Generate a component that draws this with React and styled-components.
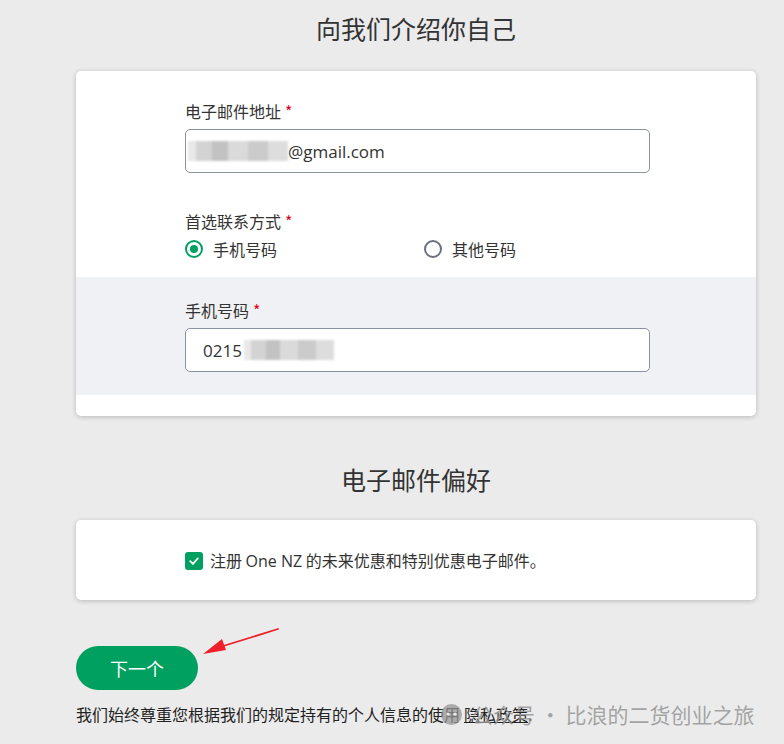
import React from "react";
import styled, { createGlobalStyle } from "styled-components";

const GlobalStyle = createGlobalStyle`
  html, body { margin: 0; padding: 0; background: #ebebeb; }
  body { font-family: "Lato", "Noto Sans CJK SC", sans-serif; color: #333; }
  * { box-sizing: border-box; }
`;

const Page = styled.div`
  position: relative;
  width: 784px;
  height: 744px;
  overflow: hidden;
  padding-left: 76px;
`;

const Column = styled.div`
  width: 680px;
  display: flex;
  flex-direction: column;
`;

const SectionTitle = styled.h1`
  margin: ${(p) => p.$top}px 0 ${(p) => p.$bottom}px;
  font-family: "Noto Sans CJK SC", sans-serif;
  font-weight: 400;
  font-size: 25px;
  line-height: 32px;
  text-align: center;
  color: #333;
`;

const Card = styled.div`
  background: #fff;
  border-radius: 5px;
  box-shadow: 0 1px 5px rgba(0, 0, 0, 0.22);
  padding: ${(p) => p.$pad};
  display: flex;
  flex-direction: column;
`;

const Inner = styled.div`
  width: 465px;
  margin-left: 109px;
  display: flex;
  flex-direction: column;
`;

const Shaded = styled.div`
  background: #f0f1f4;
  padding: 23px 0 23px;
`;

const Label = styled.div`
  font-family: "Noto Sans CJK SC", sans-serif;
  font-size: 16px;
  line-height: 20px;
  color: #333;
  margin-bottom: 8px;
`;

const Star = styled.span`
  color: #e0001b;
  margin-left: 4px;
`;

const Input = styled.div`
  height: 44px;
  border: 1px solid #8d92a0;
  border-radius: 5px;
  background: #fff;
  display: flex;
  align-items: center;
  padding-left: ${(p) => p.$pl || 17}px;
  font-family: "Open Sans", sans-serif;
  font-size: 17px;
  color: #333;
  position: relative;
  margin-bottom: ${(p) => p.$mb || 0}px;
`;

const Mosaic = styled.span`
  display: inline-block;
  width: ${(p) => p.$w}px;
  height: 20px;
  margin-left: ${(p) => p.$ml || 0}px;
  background: linear-gradient(
    90deg,
    #e6e6e6 0 8%,
    #cfcfcf 8% 24%,
    #bcbcbc 24% 40%,
    #d6d6d6 40% 60%,
    #c6c6c6 60% 80%,
    #dadada 80% 100%
  );
  filter: blur(1.2px);
  opacity: 0.9;
`;

const RadioRow = styled.div`
  display: grid;
  grid-template-columns: 239px 1fr;
  margin-top: -2px;
  margin-bottom: 16px;
`;

const RadioOption = styled.label`
  display: flex;
  align-items: center;
  gap: 10px;
  font-family: "Noto Sans CJK SC", sans-serif;
  font-size: 16px;
  line-height: 24px;
  color: #333;
`;

const RadioCircle = styled.span`
  width: 18px;
  height: 18px;
  border-radius: 50%;
  border: 2px solid ${(p) => (p.$checked ? "#00a060" : "#6b7080")};
  background: #fff;
  display: flex;
  align-items: center;
  justify-content: center;
  &::after {
    content: "";
    width: 8px;
    height: 8px;
    border-radius: 50%;
    background: ${(p) => (p.$checked ? "#00a060" : "transparent")};
  }
`;

const CheckRow = styled.label`
  display: flex;
  align-items: center;
  gap: 7px;
  font-family: "Noto Sans CJK SC", sans-serif;
  font-size: 16px;
  line-height: 20px;
  color: #333;
`;

const CheckBox = styled.span`
  width: 18px;
  height: 18px;
  border-radius: 3px;
  background: #00a060;
  display: flex;
  align-items: center;
  justify-content: center;
`;

const Latin = styled.span`
  font-family: "Open Sans", "Noto Sans CJK SC", sans-serif;
`;

const NextButton = styled.button`
  margin-top: 46px;
  width: 122px;
  height: 44px;
  border: none;
  border-radius: 22px;
  background: #00a060;
  color: #fff;
  font-family: "Noto Sans CJK SC", sans-serif;
  font-size: 18px;
  cursor: pointer;
`;

const Footnote = styled.p`
  margin: 12px 0 0;
  font-family: "Noto Sans CJK SC", sans-serif;
  font-size: 16px;
  line-height: 24px;
  color: #222;
  white-space: nowrap;
`;

const Link = styled.a`
  color: #222;
  text-decoration: underline;
  margin-left: 4px;
`;

const Arrow = styled.svg`
  position: absolute;
  left: 198px;
  top: 625px;
`;

const Watermark = styled.div`
  position: absolute;
  left: 441px;
  top: 700px;
  display: flex;
  align-items: center;
  gap: 10px;
  font-family: "Noto Sans CJK SC", sans-serif;
  font-size: 21px;
  line-height: 28px;
  color: rgba(150, 150, 150, 0.85);
  white-space: nowrap;
  pointer-events: none;
`;

const WmIcon = styled.span`
  width: 21px;
  height: 21px;
  border-radius: 50%;
  background: rgba(150, 150, 150, 0.75);
  display: flex;
  align-items: center;
  justify-content: center;
`;

export default function App() {
  return (
    <>
      <GlobalStyle />
      <Page>
        <Column>
          <SectionTitle $top={12} $bottom={27}>向我们介绍你自己</SectionTitle>
          <Card $pad="30px 0 21px">
            <Inner>
              <Label>
                电子邮件地址<Star>*</Star>
              </Label>
              <Input $mb={38} $pl={2}>
                <Mosaic $w={100} />
                <span>@gmail.com</span>
              </Input>
              <Label>
                首选联系方式<Star>*</Star>
              </Label>
              <RadioRow>
                <RadioOption>
                  <RadioCircle $checked />
                  手机号码
                </RadioOption>
                <RadioOption>
                  <RadioCircle />
                  其他号码
                </RadioOption>
              </RadioRow>
            </Inner>
            <Shaded>
              <Inner>
                <Label>
                  手机号码<Star>*</Star>
                </Label>
                <Input>
                  <span>0215</span>
                  <Mosaic $w={90} $ml={2} />
                </Input>
              </Inner>
            </Shaded>
          </Card>

          <SectionTitle $top={47} $bottom={25}>电子邮件偏好</SectionTitle>
          <Card $pad="30px 0 29px">
            <Inner>
              <CheckRow>
                <CheckBox>
                  <svg width="12" height="12" viewBox="0 0 12 12">
                    <path d="M2.2 6.2 L4.9 8.8 L9.8 3.4" fill="none" stroke="#fff" strokeWidth="1.8" strokeLinecap="round" strokeLinejoin="round" />
                  </svg>
                </CheckBox>
                <span>
                  注册 <Latin>One NZ</Latin> 的未来优惠和特别优惠电子邮件。
                </span>
              </CheckRow>
            </Inner>
          </Card>

          <NextButton>下一个</NextButton>
          <Footnote>
            我们始终尊重您根据我们的规定持有的个人信息的使用<Link href="#">隐私政策</Link>.
          </Footnote>
        </Column>

        <Arrow width="84" height="34" viewBox="0 0 84 34">
          <path d="M80 4 L22 22" stroke="#f0202a" strokeWidth="1.8" strokeLinecap="round" />
          <polygon points="5,29 24,14 28,25" fill="#f0202a" />
        </Arrow>

        <Watermark>
          <WmIcon>
            <svg width="15" height="12" viewBox="0 0 15 12">
              <circle cx="4" cy="6" r="1.6" fill="#ebebeb" />
              <circle cx="11" cy="6" r="1.6" fill="#ebebeb" />
            </svg>
          </WmIcon>
          <span>公众号 · 比浪的二货创业之旅</span>
        </Watermark>
      </Page>
    </>
  );
}
